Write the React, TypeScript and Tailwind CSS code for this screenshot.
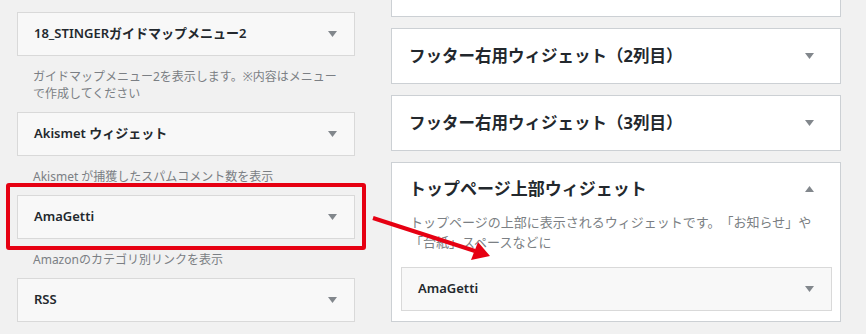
const FONT = 'font-["Noto_Sans","Noto_Sans_CJK_JP",sans-serif] [text-spacing-trim:space-all]';

function Caret({ up = false }: { up?: boolean }) {
  return (
    <svg width="9" height="6" viewBox="0 0 9 6" className="shrink-0">
      {up ? (
        <path d="M0 6 L4.5 0 L9 6 Z" fill="#82878c" />
      ) : (
        <path d="M0 0 L9 0 L4.5 6 Z" fill="#82878c" />
      )}
    </svg>
  );
}

function SmallWidget({ title, className = '' }: { title: string; className?: string }) {
  return (
    <div
      className={`h-[44px] flex items-center justify-between pl-[16px] pr-[17px] bg-[#f8f8f8] border border-[#d9d9d9] ${className}`}
    >
      <span className="text-[13px] font-semibold text-[#23282d]">{title}</span>
      <Caret />
    </div>
  );
}

function Desc({ children }: { children: React.ReactNode }) {
  return (
    <p className="mt-[12px] mb-[10px] pl-[16px] text-[12px] leading-[17px] text-[#7b7f84]">
      {children}
    </p>
  );
}

function Sidebar({ title }: { title: string }) {
  return (
    <div className="h-[56px] flex items-center justify-between pl-[17px] pr-[26px] bg-white border border-[#ccd0d4]">
      <span className="text-[16.5px] font-bold text-[#23282d]">{title}</span>
      <Caret />
    </div>
  );
}

export default function App() {
  return (
    <div className={`relative w-[866px] h-[334px] overflow-hidden bg-[#f1f1f1] flex gap-[36px] pl-[17px] ${FONT}`}>
      {/* available widgets */}
      <div className="w-[338px] pt-[12px] shrink-0">
        <SmallWidget title="18_STINGERガイドマップメニュー2" />
        <Desc>
          ガイドマップメニュー2を表示します。※内容はメニュー
          <br />
          で作成してください
        </Desc>
        <SmallWidget title="Akismet ウィジェット" />
        <Desc>Akismet が捕獲したスパムコメント数を表示</Desc>
        <SmallWidget title="AmaGetti" />
        <Desc>Amazonのカテゴリ別リンクを表示</Desc>
        <SmallWidget title="RSS" />
      </div>

      {/* sidebars */}
      <div className="w-[450px] shrink-0 flex flex-col gap-[11px]">
        <div className="h-[17px] bg-white border-x border-b border-[#ccd0d4]" />
        <Sidebar title="フッター右用ウィジェット（2列目）" />
        <Sidebar title="フッター右用ウィジェット（3列目）" />
        <div className="bg-white border border-[#ccd0d4] pt-[14px] pb-[10px]">
          <div className="flex items-center justify-between pl-[17px] pr-[26px]">
            <span className="text-[17px] leading-[24px] font-bold text-[#23282d]">
              トップページ上部ウィジェット
            </span>
            <Caret up />
          </div>
          <p className="mt-[11px] pl-[18px] text-[13px] leading-[20px] text-[#7b7f84]">
            トップページの上部に表示されるウィジェットです。「お知らせ」や
            <br />
            「台紙」スペースなどに
          </p>
          <div className="mt-[15px] ml-[9px] mr-[8px]">
            <SmallWidget title="AmaGetti" />
          </div>
        </div>
      </div>

      {/* annotation overlay */}
      <div className="absolute left-[6px] top-[183px] w-[360px] h-[67px] border-[4px] border-[#e60012] rounded-[3px] pointer-events-none" />
      <svg
        className="absolute left-0 top-0 pointer-events-none"
        width="866"
        height="334"
        viewBox="0 0 866 334"
      >
        <line x1="373" y1="218" x2="475" y2="251" stroke="#e60012" strokeWidth="4" />
        <path d="M490 256 L471 260 L478 242 Z" fill="#e60012" />
      </svg>
    </div>
  );
}
